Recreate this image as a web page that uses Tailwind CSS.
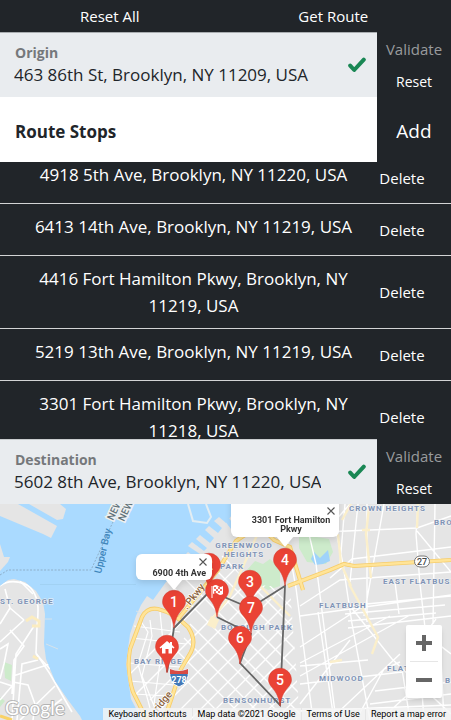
<!DOCTYPE html>
<html lang="en">
<head>
<meta charset="utf-8">
<meta name="viewport" content="width=device-width, initial-scale=1">
<title>Route planner</title>
<script src="https://cdn.jsdelivr.net/npm/@tailwindcss/browser@4"></script>
</head>
<body class="h-screen min-h-[600px] flex flex-col overflow-hidden bg-[#212529] text-white font-['Open_Sans','Noto_Sans',sans-serif] text-[15px]">

<header class="grid grid-cols-2 h-8 shrink-0 pr-1">
  <button type="button" class="pr-1">Reset All</button>
  <button type="button" class="pr-1">Get Route</button>
</header>

<section class="flex h-[65px] shrink-0">
  <div class="relative flex-1 min-w-0 bg-[#e9ecef] border-t border-[#a9adb0] pt-3 text-[#212529]">
    <label for="origin" class="block pl-[15px] text-[14px] leading-4 font-bold text-[#75787b]">Origin</label>
    <input id="origin" type="text" readonly value="463 86th St, Brooklyn, NY 11209, USA" class="block w-full h-7 pl-[14px] pr-14 text-[17px] leading-7 bg-transparent outline-none">
    <svg class="absolute right-[11px] top-6 w-[18px] h-4" viewBox="0 0 18 16" fill="none" stroke="#198754" stroke-width="4" stroke-linecap="round" stroke-linejoin="round"><path d="M2.2 8.6 L6.2 13 L15.8 2.6"/></svg>
  </div>
  <div class="flex flex-col w-[74px] shrink-0">
    <button type="button" disabled class="h-[33px] pt-[2px] text-[#999b9d]">Validate</button>
    <button type="button" class="h-8 text-[14px]">Reset</button>
  </div>
</section>

<section class="flex h-[65px] shrink-0">
  <h2 class="flex-1 flex items-center pl-[15px] pt-1 bg-white text-[#212529] text-[17px] font-bold">Route Stops</h2>
  <button type="button" class="w-[74px] shrink-0 pt-1 text-[19px]">Add</button>
</section>

<ul class="flex-1 min-h-0 overflow-hidden text-[17px] leading-[27px]">
  <li class="-mt-[10px] flex min-h-[52px] border-b border-[#d3d4d5]">
    <p class="flex-1 pt-[9px] pb-[9px] text-center pl-7 pr-[18px]">4918 5th Ave, Brooklyn, NY 11220, USA</p>
    <button type="button" class="w-[74px] shrink-0 pr-6 pt-px text-[15px]">Delete</button>
  </li>
  <li class="flex min-h-[52px] border-b border-[#d3d4d5]">
    <p class="flex-1 pt-[9px] pb-[9px] text-center pl-7 pr-[18px]">6413 14th Ave, Brooklyn, NY 11219, USA</p>
    <button type="button" class="w-[74px] shrink-0 pr-6 pt-px text-[15px]">Delete</button>
  </li>
  <li class="flex min-h-[52px] border-b border-[#d3d4d5]">
    <p class="flex-1 pt-[9px] pb-[9px] text-center pl-7 pr-[18px]">4416 Fort Hamilton Pkwy, Brooklyn, NY 11219, USA</p>
    <button type="button" class="w-[74px] shrink-0 pr-6 pt-px text-[15px]">Delete</button>
  </li>
  <li class="flex min-h-[52px] border-b border-[#d3d4d5]">
    <p class="flex-1 pt-[9px] pb-[9px] text-center pl-7 pr-[18px]">5219 13th Ave, Brooklyn, NY 11219, USA</p>
    <button type="button" class="w-[74px] shrink-0 pr-6 pt-px text-[15px]">Delete</button>
  </li>
  <li class="flex min-h-[52px] border-b border-[#d3d4d5]">
    <p class="flex-1 pt-[9px] pb-[9px] text-center pl-7 pr-[18px]">3301 Fort Hamilton Pkwy, Brooklyn, NY 11218, USA</p>
    <button type="button" class="w-[74px] shrink-0 pr-6 pt-px text-[15px]">Delete</button>
  </li>
</ul>

<section class="flex h-[65px] shrink-0">
  <div class="relative flex-1 min-w-0 bg-[#e9ecef] border-t border-[#c9ccce] pt-3 text-[#212529]">
    <label for="destination" class="block pl-[15px] text-[14px] leading-4 font-bold text-[#75787b]">Destination</label>
    <input id="destination" type="text" readonly value="5602 8th Ave, Brooklyn, NY 11220, USA" class="block w-full h-7 pl-[14px] pr-14 text-[17px] leading-7 bg-transparent outline-none">
    <svg class="absolute right-[11px] top-6 w-[18px] h-4" viewBox="0 0 18 16" fill="none" stroke="#198754" stroke-width="4" stroke-linecap="round" stroke-linejoin="round"><path d="M2.2 8.6 L6.2 13 L15.8 2.6"/></svg>
  </div>
  <div class="flex flex-col w-[74px] shrink-0">
    <button type="button" disabled class="h-[33px] pt-[2px] text-[#999b9d]">Validate</button>
    <button type="button" class="h-8 text-[14px]">Reset</button>
  </div>
</section>

<main class="relative h-[30vh] shrink-0 overflow-hidden bg-[#e5e5e5] font-['Roboto',sans-serif] text-black">
  <svg class="absolute inset-0 w-full h-full" viewBox="0 0 451 216" preserveAspectRatio="xMinYMin slice" role="img" aria-label="Map of the route through Brooklyn">
    <defs>
      <path id="pin" d="M0 0C-1.5 -10 -3.6 -13 -7.5 -18C-10 -21 -11.5 -23 -11.5 -26.3A11.5 11.5 0 0 1 11.5 -26.3C11.5 -23 10 -21 7.5 -18C3.6 -13 1.5 -10 0 0Z" fill="#ea4335" stroke="#d33b2f" stroke-width=".5"/>
      <clipPath id="bk"><path d="M142 216L131 195L126 160L130 130L136 112L141 101L150 92L165 78L187 54L205 45L214 28L228 12L240 0H451V216Z"/></clipPath>
      <clipPath id="si"><path d="M0 82L8 76L14 75L25 78L36 87L43 98L45 110L44 140L46 155L55 177L68 196L80 212V216H0Z"/></clipPath>
      <clipPath id="south"><path d="M142 216L126 160L136 112L150 92L215 40L248 80L290 84L300 216Z"/></clipPath>
      <clipPath id="east"><path d="M300 216L290 84L275 0H451V216Z"/></clipPath>
    </defs>
    <rect width="451" height="216" fill="#aadaff"/>
    <g fill="#e5e5e5">
      <path d="M0 0H18L57 22L51 34L43 30L0 12Z"/>
      <path d="M29 0H60L66 5L63 15L57 16Z"/>
      <path d="M0 40L4 53L10 53L8 58L0 67Z"/>
      <path d="M0 82L8 76L14 75L25 78L36 87L43 98L45 110L44 140L46 155L55 177L68 196L80 212L82 216H0Z"/>
      <path d="M142 216L131 195L126 160L130 130L136 112L141 101L147 92L153 96L166 78L190 58L184 52L188 48L196 54L200 50L188 42L192 38L204 47L207 44L196 35L200 31L210 39L214 34L205 26L209 22L218 29L222 24L214 17L219 13L226 19L240 0H451V216Z"/>
    </g>
    <path d="M188 0L193 17L207 19L211 13L206 0" fill="none" stroke="#e3edf2" stroke-width="2"/>
    <path d="M44 115h8M46 140l12 5M136 107l6 3" stroke="#d7e3eb" stroke-width="1"/>
    <path d="M222 6L231 0L229 14L238 27L234 29L225 17Z" fill="#aadaff"/>
    <g fill="#cdebcb">
      <path d="M246 67L255 57L263 60L270 55L280 64V82L268 86L252 76Z"/>
      <path d="M299 30L329 35L333 48L326 60L307 58L299 44Z"/>
      <path d="M4 158L12 161L11 177L5 174Z"/><path d="M0 193L5 197L0 203Z"/>
    </g>
    <path d="M314 48L320 54L328 46L330 57L323 60L315 61L311 55Z" fill="#9fd3fa"/>

    <g clip-path="url(#si)" fill="none" stroke="#fff" stroke-width="1.6">
      <path d="M0 82C10 74 28 78 33 87C40 98 38 110 37 123L36 149L50 170L72 208"/>
      <path d="M5 85L10 104L0 120M10 104L24 116M24 116L0 138M20 77L33 90M10 126L24 142L14 156L12 190M34 122L16 150L12 216M36 150L50 165M50 160L13 172M38 156L22 160L17 216M13 178L28 181L35 200L33 216M55 182L20 216M62 195L40 212M0 178L12 182L0 196M0 145L8 140L4 160L0 175"/>
      <path d="M26 117L32 113L39 117V122H32M33 152L38 155" stroke="#fbecc0" stroke-width="3"/>
      <path d="M0 212L12 216" stroke="#f9d266" stroke-width="3"/>
    </g>

    <g clip-path="url(#bk)" fill="none" stroke="#fff">
      <g clip-path="url(#south)" stroke-width="1.3">
        <path d="M130 170L250 50M120 206L280 46M150 196L290 56M150 216L300 66M170 216L300 86M190 216L310 96M205 216L310 111M222 216L310 128M240 216L310 146M258 216L310 164M275 216L310 181"/>
        <path d="M180 70L310 200M165 75L300 210M192 62L310 180M206 56L310 160M222 52L310 140M190 120L286 216M184 134L266 216M176 146L246 216M185 175L226 216M240 52L310 122"/>
      </g>
      <path d="M140 116L148 128L138 160L150 204M150 116L152 132L142 172L158 212M134 122L180 128M132 134L186 140M129 159L180 163M130 177L174 181M134 190L168 192M160 108L163 138L154 200M172 112L170 160" stroke-width="1.2"/>
      <g clip-path="url(#east)" stroke-width="1.4">
        <path d="M275 0L288 40L296 84L313 216M302 0L316 60L336 216M335 22L343 60L352 120L370 216M345 0L340 60M358 0L350 78M367 0V118M384 0L364 112M395 78L399 110M418 0L416 30L420 80L428 150M435 0L433 120M417 27L451 68M350 0L325 28M300 29L417 24L451 12M330 74L352 55L451 43M300 102L340 76L451 68M300 112L451 91M345 102L451 92M345 110L445 101M348 117L436 109M348 124L451 112M300 143L360 104M300 159L390 112M300 172L410 111M300 162L368 156M300 180L402 168M350 102L392 155L451 210M356 216L384 165L400 158M300 200L350 136M330 216L400 150M380 216L425 175M375 187L451 178M370 200L451 190M300 207L451 201M402 165L410 216M420 160L424 216M436 115L425 130L451 150M318 108L334 216M440 135L444 216"/>
      </g>
      <g stroke="#fbefcb" stroke-width="2.4">
        <path d="M338 30L341 60L351 82M369 4L366 30L371 74M418 0L417 24M362 26H370M349 80L378 133L372 150M210 118L230 92L262 20M260 82L290 112M330 158L342 156M351 0L342 16"/>
      </g>
      <g stroke="#f7cd6a" stroke-width="4.2">
        <path d="M164 216L173 190L181 165L191 148Q197 136 188 123Q174 109 158 105Q147 103 142 113L130 145Q126 167 133 188L147 216M178 115L218 66L236 37L258 22L272 0M258 20L274 36L290 43L303 86M288 82L330 66L344 60L354 62L451 56"/>
      </g>
      <g stroke="#ffe498" stroke-width="2.5">
        <path d="M164 216L173 190L181 165L191 148Q197 136 188 123Q174 109 158 105Q147 103 142 113L130 145Q126 167 133 188L147 216M178 115L218 66L236 37L258 22L272 0M258 20L274 36L290 43L303 86M288 82L330 66L344 60L354 62L451 56"/>
      </g>
      <path d="M207 121L211 112L219 116L215 125Z" fill="#fbefcb" stroke="none"/>
    </g>

    <path d="M0 71L8 66H91L112 20L122 0" fill="none" stroke="#8eafc9" stroke-width="1" stroke-dasharray="2 1.5"/>
    <path d="M40 80.500H136" stroke="#9dcdee" stroke-width=".7"/>
    <g font-weight="500">
      <g fill="#5f7078" stroke="#eef0f1" stroke-width="3" paint-order="stroke" font-size="10">
        <text transform="translate(113 17) rotate(-65)">NEW JERSEY</text>
        <text transform="translate(124 18) rotate(-65)">NEW YORK</text>
      </g>
      <text transform="translate(101 70) rotate(-77)" font-size="10" fill="#3f86bb">Upper Bay</text>
      <g font-size="8" font-weight="700" fill="#8093b5" stroke="#f1f3f5" stroke-width="1" paint-order="stroke" class="tracking-[1px]">
        <text x="0" y="100">ST. GEORGE</text>
        <text x="134" y="160">BAY RIDGE</text>
        <text x="244" y="44" text-anchor="middle">GREENWOOD</text>
        <text x="244" y="53" text-anchor="middle">HEIGHTS</text>
        <text x="220" y="65">PARK</text>
        <text x="221" y="126">BOROUGH PARK</text>
        <text x="223" y="199">BENSONHURST</text>
        <text x="349" y="7">CROWN HEIGHTS</text>
        <text x="434" y="21">BROWNSVILLE</text>
        <text x="383" y="80">EAST FLATBUSH</text>
        <text x="319" y="104">FLATBUSH</text>
        <text x="319" y="177">MIDWOOD</text>
        <text x="387" y="167">FLATLANDS</text>
        <text x="445" y="179">BERGEN</text>
      </g>
      <g font-size="10" fill="#8b6340" stroke="#fff" stroke-width="1.500" paint-order="stroke">
        <text transform="translate(187 106) rotate(-52)">. Pkwy</text>
        <text transform="translate(158 208) rotate(-50)">ridge</text>
      </g>
    </g>
    <path d="M170 165Q179 169 188 165Q190 179 179 183Q168 179 170 165Z" fill="#4178b8" stroke="#fff"/>
    <path d="M170 165Q179 169 188 165V170H170Z" fill="#d84b45"/>
    <text x="179" y="179" text-anchor="middle" font-size="9" font-weight="700" fill="#fff">278</text>
    <rect x="414.500" y="52" width="15" height="11" rx="5.500" fill="#fff" stroke="#777"/>
    <text x="422" y="61" text-anchor="middle" font-size="9" font-weight="500" fill="#444">27</text>

    <path d="M167 168L174 124L210 87L250 104L285 82L280 201L240 159L251 130L217 113" fill="none" stroke="#666" stroke-width="1.800"/>

    <g font-size="14" font-weight="500" fill="#fff" text-anchor="middle">
      <g transform="translate(209 87)"><use href="#pin"/><text y="-21">2</text></g>
      <g transform="translate(285 82)"><use href="#pin"/><text y="-21">4</text></g>
      <g transform="translate(250 104)"><use href="#pin"/><text y="-21">3</text></g>
      <g transform="translate(217 113)"><use href="#pin"/><path d="M-5 -31V-19" stroke="#fff"/><path d="M-4 -31Q-1 -33 1 -31T6 -31V-23Q3 -21 1 -23T-4 -23Z"/><path d="M-3 -29h2M1 -29h2M-1 -27h2M3 -27h2M-3 -25h2M1 -25h2" stroke="#ea4335" stroke-width="1.500"/></g>
      <g transform="translate(174 124)"><use href="#pin"/><text y="-21">1</text></g>
      <g transform="translate(251 130)"><use href="#pin"/><text y="-21">7</text></g>
      <g transform="translate(240 160)"><use href="#pin"/><text y="-21">6</text></g>
      <g transform="translate(167 169)"><use href="#pin"/><path d="M0 -32L-7.500 -25.500L-6.500 -24.500L-5 -25.500V-19.500H-1.500V-24H1.500V-19.500H5V-25.500L6.500 -24.500L7.500 -25.500L5 -28V-31H3V-29.500Z"/></g>
      <g transform="translate(280 202)"><use href="#pin"/><text y="-21">5</text></g>
    </g>

    <text x="5" y="211" fill="#fff" stroke="#8a8a8a" stroke-opacity=".55" stroke-width="2" paint-order="stroke" font-size="19" class="font-['Lato',sans-serif]">Google</text>
  </svg>

  <!-- Info windows -->
  <div class="absolute left-[136px] top-[50px] w-[76px] h-[26px] rounded-md bg-white drop-shadow-md">
    <button type="button" aria-label="Close" class="absolute right-[5px] top-1 block">
      <svg class="w-2 h-2" viewBox="0 0 8 8" stroke="#555" stroke-width="1.1"><path d="M.5 .5l7 7M7.500 .5l-7 7"/></svg>
    </button>
    <p class="pt-[14px] pr-[6px] text-right text-[9px] leading-[10px] font-bold text-[#333]">6900 4th Ave</p>
    <svg class="absolute left-[29px] top-[25px] w-[18px] h-3" viewBox="0 0 18 12"><path d="M0 0H18L9 11Z" fill="#fff"/></svg>
  </div>
  <div class="absolute left-[231px] -top-3 w-[108px] h-[45px] rounded-md bg-white drop-shadow-md">
    <button type="button" aria-label="Close" class="absolute right-1 top-[15px] block">
      <svg class="w-2 h-2" viewBox="0 0 8 8" stroke="#555" stroke-width="1.1"><path d="M.5 .5l7 7M7.500 .5l-7 7"/></svg>
    </button>
    <p class="pt-6 pl-[18px] pr-[6px] text-center text-[9px] leading-[9px] font-bold text-[#333]">3301 Fort Hamilton Pkwy</p>
    <svg class="absolute left-[45px] top-[44px] w-[18px] h-3" viewBox="0 0 18 12"><path d="M0 0H18L9 11Z" fill="#fff"/></svg>
  </div>

  <!-- Zoom control -->
  <div class="absolute right-[9px] bottom-[22px] w-9 rounded-xs bg-white shadow-md flex flex-col items-center">
    <button type="button" aria-label="Zoom in" class="h-9 w-full flex items-center justify-center"><svg class="w-4 h-4" viewBox="0 0 16 16" fill="#666"><path d="M6 0h4v6h6v4h-6v6H6v-6H0V6h6z"/></svg></button>
    <div class="h-px w-7 bg-[#e6e6e6]"></div>
    <button type="button" aria-label="Zoom out" class="h-9 w-full flex items-center justify-center"><svg class="w-4 h-4" viewBox="0 0 16 16" fill="#666"><path d="M0 6h16v4H0z"/></svg></button>
  </div>

  <!-- Attribution -->
  <div class="absolute right-0 bottom-0 flex h-3 gap-px text-[9px] leading-3 whitespace-nowrap">
    <button type="button" class="px-[5px] bg-[#f5f5f5]/80">Keyboard shortcuts</button>
    <span class="px-[5px] bg-[#f5f5f5]/80">Map data ©2021 Google</span>
    <a href="#" class="px-[5px] bg-[#f5f5f5]/80">Terms of Use</a>
    <a href="#" class="px-[5px] bg-[#f5f5f5]/80">Report a map error</a>
  </div>
</main>
</body>
</html>
